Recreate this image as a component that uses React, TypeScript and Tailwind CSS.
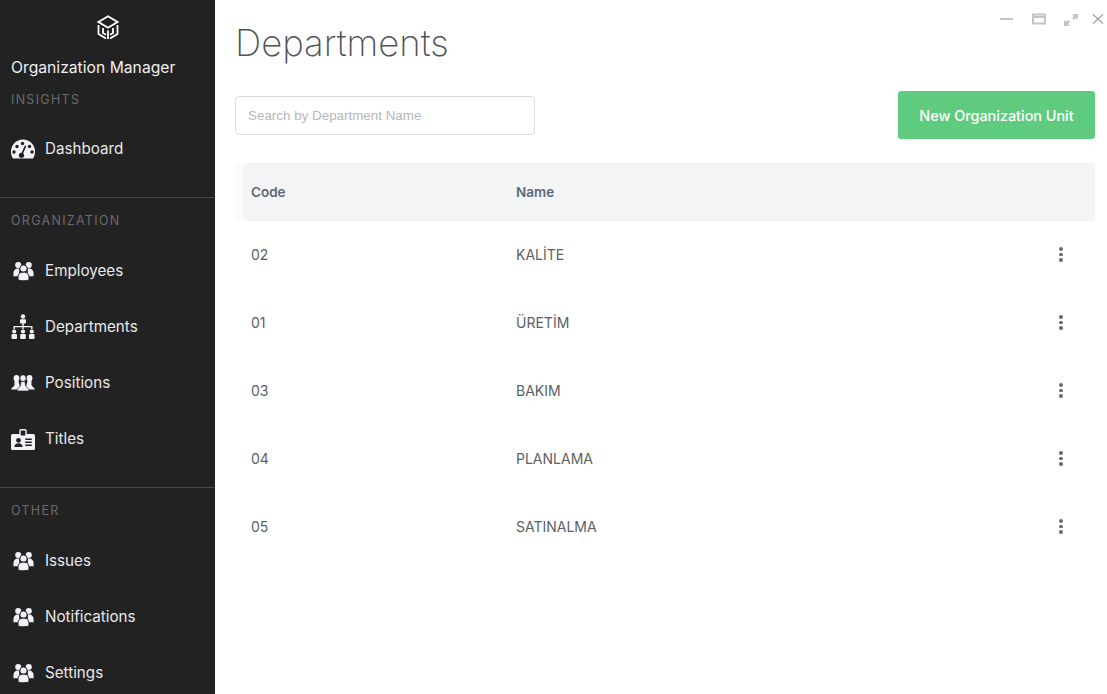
import type { ReactNode } from "react"

const departments = [
    ["02", "KALİTE"],
    ["01", "ÜRETİM"],
    ["03", "BAKIM"],
    ["04", "PLANLAMA"],
    ["05", "SATINALMA"],
]

const CubeLogo = () => (
    <svg viewBox="0 0 22 25" className="w-[22px] h-[25px]" fill="none" stroke="white" strokeWidth="1.8">
        <path d="M11 1.200 20.500 7 11 12.800 1.500 7z" />
        <path d="M1.500 10v9L9 23.500M20.500 10v9L13 23.500" />
        <path d="M6 13v5l3 1.800M16 13v5l-3 1.800M11 15.500V24" />
    </svg>
)

const DashboardIcon = () => (
    <svg viewBox="0 0 24 20" className="w-6 h-5">
        <path d="M2 19.500C.7 17.500 0 15 0 12.500 0 5.800 5.400.5 12 .5s12 5.300 12 12c0 2.500-.7 5-2 7z" fill="currentColor" />
        <g fill="#222">
            <circle cx="6" cy="7.500" r="1.700" />
            <circle cx="11.500" cy="4.500" r="1.700" />
            <circle cx="18.500" cy="7.500" r="1.700" />
            <circle cx="3" cy="13" r="1.700" />
            <circle cx="21" cy="13" r="1.700" />
            <circle cx="10.500" cy="16.300" r="2.600" />
        </g>
        <path d="M10.500 16 14.300 7.500" stroke="#222" strokeWidth="1.700" strokeLinecap="round" />
    </svg>
)

const UsersIcon = () => (
    <svg viewBox="0 0 24 20" className="w-[23px] h-5" fill="currentColor">
        <circle cx="6.500" cy="3.700" r="3.200" />
        <circle cx="17.500" cy="3.700" r="3.200" />
        <path d="M1.500 15.500V12c0-2.500 2-4.500 4.500-4.500h1.500v8z" />
        <path d="M22.500 15.500V12c0-2.500-2-4.500-4.500-4.500h-1.500v8z" />
        <circle cx="12" cy="7.500" r="3.800" stroke="#222" strokeWidth="1" />
        <path d="M6.300 19.500v-3.500c0-2.800 2.300-4.800 4.700-4.800h2c2.400 0 4.700 2 4.700 4.800v3.500c-3.500 1-7.900 1-11.400 0z" stroke="#222" strokeWidth="1" />
    </svg>
)

const SitemapIcon = () => (
    <svg viewBox="0 0 24 26" className="w-6 h-[26px]" fill="currentColor">
        <circle cx="12" cy="2.500" r="2.200" />
        <rect x="9" y="5.200" width="6" height="4.300" rx="1" />
        <path d="M11.300 9h1.400v3h8.800v3.200h-1.400v-1.900h-7.400v1.900h-1.400v-1.900H3.900v1.900H2.500V12h8.800z" />
        <circle cx="3.200" cy="17.500" r="2.100" />
        <circle cx="12" cy="17.500" r="2.100" />
        <circle cx="20.800" cy="17.500" r="2.100" />
        <rect x="0.500" y="20" width="5.500" height="5" rx="1" />
        <rect x="9.200" y="20" width="5.600" height="5" rx="1" />
        <rect x="18" y="20" width="5.500" height="5" rx="1" />
    </svg>
)

const PositionsIcon = () => (
    <svg viewBox="0 0 24 16" className="w-6 h-4" fill="currentColor">
        <ellipse cx="5.500" cy="3.200" rx="2.900" ry="3.200" />
        <ellipse cx="18.500" cy="3.200" rx="2.900" ry="3.200" />
        <path d="M3.500 6h4L9 12v2.500H0c0-1.500 3.200-3 3.500-4.500z" />
        <path d="M20.500 6h-4L15 12v2.500h9c0-1.500-3.200-3-3.500-4.500z" />
        <ellipse cx="12" cy="3.200" rx="3" ry="3.400" stroke="#222" strokeWidth="0.600" />
        <path d="M10 6.500h4l.5 4c.4 1.500 3.400 3 3.600 5.500H5.900c.2-2.500 3.200-4 3.600-5.500z" stroke="#222" strokeWidth="0.700" />
    </svg>
)

const TitlesIcon = () => (
    <svg viewBox="0 0 24 21" className="w-6 h-[21px]">
        <rect x="0" y="5" width="24" height="16" rx="1.500" fill="currentColor" />
        <rect x="9" y="0.700" width="6" height="6.500" rx="0.800" fill="#222" stroke="currentColor" strokeWidth="1.400" />
        <circle cx="7.500" cy="11.300" r="2.400" fill="#222" />
        <path d="M3.300 18c0-2.200 1.800-3.800 4.200-3.800s4.200 1.600 4.200 3.800z" fill="#222" />
        <path d="M14.300 10.300h6.500M14.300 13.300h6.500M14.300 16.300h6.500" stroke="#222" strokeWidth="1.500" />
    </svg>
)

const SideItem = ({ icon, label }: { icon: ReactNode; label: string }) => (
    <div className="h-14 flex items-center pl-[11px]">
        <div className="w-6 flex justify-center text-[#f1f2f6]">{icon}</div>
        <span className="ml-[10px] text-[15.2px] text-[#e8e8e8]">{label}</span>
    </div>
)

const SectionLabel = ({ children }: { children: ReactNode }) => (
    <div className="pl-[11px] text-[12.5px] leading-4 tracking-[1.3px] text-[#6b6b6b]">{children}</div>
)

const WindowControls = () => (
    <div className="absolute top-[12px] right-[2px] flex items-center gap-[14px] text-[#c4c4c4]">
        <svg viewBox="0 0 18 14" className="w-[18px] h-[14px]"><path d="M2 7h13" stroke="currentColor" strokeWidth="2" /></svg>
        <svg viewBox="0 0 18 14" className="w-[18px] h-[14px]"><path d="M3 2.500h12v9H3z M3 5h12" fill="none" stroke="currentColor" strokeWidth="2" /></svg>
        <svg viewBox="0 0 18 14" className="w-[18px] h-[14px]" fill="currentColor"><path d="M10 2h6v6l-2-2-2 2-2-2 2-2zM2 14V8l2 1.500L6 8l2 2-2 2 2 2z" /></svg>
        <svg viewBox="0 0 18 14" className="w-[14px] h-[14px] ml-[-3px]"><path d="M2.500 1l13 12M15.500 1l-13 12" stroke="#8e8e8e" strokeWidth="1.400" /></svg>
    </div>
)

export default function App() {
    return (
        <div className="relative flex w-full h-[694px] overflow-hidden bg-white font-['Inter',sans-serif]">
            <aside className="w-[215px] shrink-0 bg-[#222222] text-white">
                <div className="pt-[15px] flex justify-center"><CubeLogo /></div>
                <div className="pl-[11px] mt-[16px] text-[15.7px] leading-6 text-[#f0f0f0]">Organization Manager</div>
                <div className="mt-[12px]"><SectionLabel>INSIGHTS</SectionLabel></div>
                <div className="mt-[13px] pb-[20px] border-b border-[#4a4a4a]">
                    <SideItem icon={<DashboardIcon />} label="Dashboard" />
                </div>
                <div className="mt-[15px]"><SectionLabel>ORGANIZATION</SectionLabel></div>
                <div className="mt-[14px] pb-[20px] border-b border-[#4a4a4a]">
                    <SideItem icon={<UsersIcon />} label="Employees" />
                    <SideItem icon={<SitemapIcon />} label="Departments" />
                    <SideItem icon={<PositionsIcon />} label="Positions" />
                    <SideItem icon={<TitlesIcon />} label="Titles" />
                </div>
                <div className="mt-[15px]"><SectionLabel>OTHER</SectionLabel></div>
                <div className="mt-[14px]">
                    <SideItem icon={<UsersIcon />} label="Issues" />
                    <SideItem icon={<UsersIcon />} label="Notifications" />
                    <SideItem icon={<UsersIcon />} label="Settings" />
                </div>
            </aside>

            <main className="relative flex-1 pl-[20px] pr-[12px]">
                <WindowControls />
                <h1 className="pt-[18px] text-[36.5px] leading-[50px] font-extralight text-[#4f5459]">Departments</h1>
                <div className="mt-[23px] flex items-center justify-between">
                    <input
                        placeholder="Search by Department Name"
                        className="w-[300px] h-[39px] px-3 rounded border border-[#dcdcdc] text-[13.4px] font-['Liberation_Sans',sans-serif] outline-none placeholder:text-[#b8b8b8]"
                    />
                    <button className="w-[197px] h-[48px] pt-[2px] rounded-[3px] bg-[#5fcb7f] text-white text-[14.4px] font-medium">
                        New Organization Unit
                    </button>
                </div>

                <div className="mt-[24px] pl-[8px] bg-[#fbfbfb]">
                    <div className="h-[58px] pt-[1px] flex items-center rounded-l-lg bg-[#f3f4f6] text-[13.5px] font-semibold text-[#5e6875]">
                        <div className="w-[273px] pl-[8px]">Code</div>
                        <div>Name</div>
                    </div>
                </div>
                {departments.map(([code, name]) => (
                    <div key={code} className="h-[68px] pb-[1px] flex items-center pl-[16px] text-[14px] text-[#5c5f63]">
                        <div className="w-[265px]">{code}</div>
                        <div className="flex-1">{name}</div>
                        <div className="w-[4px] mr-[32px] flex flex-col gap-[2px]">
                            <span className="w-[4px] h-[3.500px] rounded-full bg-[#66696e]" />
                            <span className="w-[4px] h-[3.500px] rounded-full bg-[#66696e]" />
                            <span className="w-[4px] h-[3.500px] rounded-full bg-[#66696e]" />
                        </div>
                    </div>
                ))}
            </main>
        </div>
    )
}
